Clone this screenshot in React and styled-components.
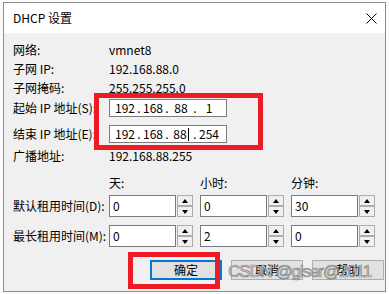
import React from "react";
import styled, { createGlobalStyle } from "styled-components";

const Global = createGlobalStyle`
  html, body { margin: 0; padding: 0; background: #fff; }
  body { font-family: "Noto Sans CJK SC", "Noto Sans", sans-serif; }
`;

const Page = styled.div`
  position: relative;
  width: 389px;
  height: 294px;
  overflow: hidden;
  padding: 2px 0 0 3px;
  box-sizing: border-box;
  background: #fbfbfb;
`;

const Dialog = styled.div`
  width: 383px;
  height: 290px;
  box-sizing: border-box;
  border: 1px solid #8c8c8c;
  background: #f0f0f0;
  display: flex;
  flex-direction: column;
  font-size: 12px;
  line-height: 1;
  color: #000;
`;

const TitleBar = styled.div`
  height: 30px;
  background: #fff;
  display: flex;
  align-items: center;
  justify-content: space-between;
  padding: 0 8px 0 9px;
`;

const Title = styled.span`
  font-size: 12px;
  margin-top: -1px;
`;

const Content = styled.div`
  display: flex;
  flex-direction: column;
  padding: 7px 0 0 9px;
`;

const Row = styled.div`
  display: grid;
  grid-template-columns: 96px 91px 91px 91px;
  align-items: center;
  height: ${({ h }) => h || 19}px;
  margin-top: ${({ top }) => top || 0}px;
`;

const Value = styled.span`
  grid-column: 2 / span 3;
`;

const IpBox = styled.div`
  grid-column: 2 / span 3;
  width: 118px;
  height: 18px;
  box-sizing: border-box;
  border: 1px solid #7a7a7a;
  background: #fff;
  display: flex;
  align-items: center;
  padding-left: 5px;
`;

const Seg = styled.span`
  width: 20px;
  display: inline-flex;
  justify-content: center;
  align-items: center;
`;

const Dot = styled.span`
  width: 8px;
  text-align: center;
`;

const Caret = styled.span`
  display: inline-block;
  width: 1px;
  height: 13px;
  background: #000;
  margin-left: 1px;
`;

const Spinner = styled.div`
  display: flex;
  gap: 1px;
  width: 84px;
  height: 22px;
`;

const SpinInput = styled.div`
  width: 67px;
  height: 22px;
  box-sizing: border-box;
  border: 1px solid #7a7a7a;
  background: #fff;
  padding: 4px 0 0 3px;
`;

const SpinButtons = styled.div`
  width: 16px;
  display: flex;
  flex-direction: column;
`;

const SpinBtn = styled.div`
  height: 11px;
  box-sizing: border-box;
  border: 1px solid #adadad;
  background: #f0f0f0;
  display: flex;
  align-items: center;
  justify-content: center;
  &::after {
    content: "";
    width: 0;
    height: 0;
    border-left: 3.5px solid transparent;
    border-right: 3.5px solid transparent;
    ${({ down }) =>
      down ? "border-top: 4px solid #000;" : "border-bottom: 4px solid #000;"}
  }
`;

const Buttons = styled.div`
  display: flex;
  justify-content: flex-end;
  gap: 9px;
  margin-top: 13px;
  padding-right: 1px;
`;

const Button = styled.div`
  width: 72px;
  height: 20px;
  box-sizing: border-box;
  border: ${({ primary }) => (primary ? "2px solid #0078d7" : "1px solid #adadad")};
  background: #e1e1e1;
  display: flex;
  align-items: center;
  justify-content: center;
  font-size: 12px;
`;

const RedBox = styled.div`
  position: absolute;
  box-sizing: border-box;
  border: 5px solid #ed1c24;
  left: ${({ x }) => x}px;
  top: ${({ y }) => y}px;
  width: ${({ w }) => w}px;
  height: ${({ h }) => h}px;
  pointer-events: none;
`;

const Watermark = styled.div`
  position: absolute;
  left: 228px;
  top: 262px;
  font-family: "Liberation Sans", Arial, sans-serif;
  font-size: 17px;
  letter-spacing: -1.1px;
  color: rgba(215, 215, 215, 0.9);
  -webkit-text-stroke: 0.7px rgba(105, 105, 105, 0.8);
  white-space: nowrap;
  pointer-events: none;
`;

const CloseIcon = () => (
  <svg width="11" height="11" viewBox="0 0 11 11">
    <path d="M0.5 0.5 L10.5 10.5 M10.5 0.5 L0.5 10.5" stroke="#000" strokeWidth="1" />
  </svg>
);

const Ip = ({ parts, caret }) => (
  <IpBox>
    {parts.map((p, i) => (
      <React.Fragment key={i}>
        {i > 0 && <Dot>.</Dot>}
        <Seg>
          {p}
          {caret === i && <Caret />}
        </Seg>
      </React.Fragment>
    ))}
  </IpBox>
);

const Spin = ({ value }) => (
  <Spinner>
    <SpinInput>{value}</SpinInput>
    <SpinButtons>
      <SpinBtn />
      <SpinBtn down />
    </SpinButtons>
  </Spinner>
);

export default function App() {
  return (
    <Page>
      <Global />
      <Dialog>
        <TitleBar>
          <Title>DHCP 设置</Title>
          <CloseIcon />
        </TitleBar>
        <Content>
          <Row>
            <span>网络:</span>
            <Value>vmnet8</Value>
          </Row>
          <Row>
            <span>子网 IP:</span>
            <Value>192.168.88.0</Value>
          </Row>
          <Row>
            <span>子网掩码:</span>
            <Value>255.255.255.0</Value>
          </Row>
          <Row h={18} top={2}>
            <span>起始 IP 地址(S):</span>
            <Ip parts={["192", "168", "88", "1"]} />
          </Row>
          <Row h={18} top={8}>
            <span>结束 IP 地址(E):</span>
            <Ip parts={["192", "168", "88", "254"]} caret={2} />
          </Row>
          <Row h={18} top={4}>
            <span>广播地址:</span>
            <Value>192.168.88.255</Value>
          </Row>
          <Row h={18} top={9}>
            <span />
            <span>天:</span>
            <span>小时:</span>
            <span>分钟:</span>
          </Row>
          <Row h={22} top={3}>
            <span>默认租用时间(D):</span>
            <Spin value="0" />
            <Spin value="0" />
            <Spin value="30" />
          </Row>
          <Row h={22} top={8}>
            <span>最长租用时间(M):</span>
            <Spin value="0" />
            <Spin value="2" />
            <Spin value="0" />
          </Row>
          <Buttons>
            <Button primary>确定</Button>
            <Button>取消</Button>
            <Button>帮助</Button>
          </Buttons>
        </Content>
      </Dialog>
      <RedBox x={94} y={93} w={169} h={57} />
      <RedBox x={128} y={252} w={92} h={37} />
      <Watermark>CSDN @giser@2011</Watermark>
    </Page>
  );
}
